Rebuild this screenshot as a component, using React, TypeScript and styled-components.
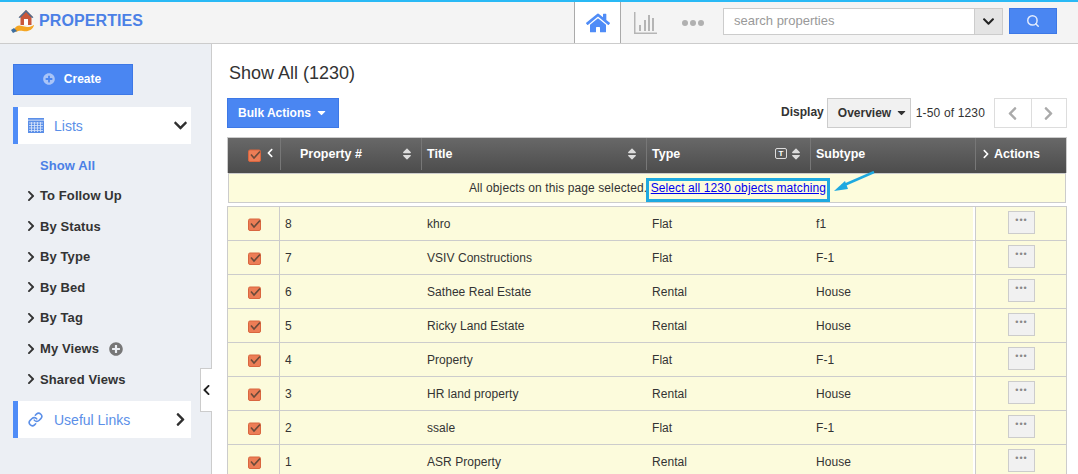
import React from "react";
import styled, { createGlobalStyle } from "styled-components";
import { FaHome, FaChevronDown, FaChevronRight, FaChevronLeft, FaPlusCircle, FaSort, FaCaretDown } from "react-icons/fa";
import { FiLink, FiSearch } from "react-icons/fi";

const rows = [
    ["8", "khro", "Flat", "f1"],
    ["7", "VSIV Constructions", "Flat", "F-1"],
    ["6", "Sathee Real Estate", "Rental", "House"],
    ["5", "Ricky Land Estate", "Rental", "House"],
    ["4", "Property", "Flat", "F-1"],
    ["3", "HR land property", "Rental", "House"],
    ["2", "ssale", "Flat", "F-1"],
    ["1", "ASR Property", "Rental", "House"],
];

const navItems = ["To Follow Up", "By Status", "By Type", "By Bed", "By Tag", "My Views", "Shared Views"];

const headColumns = "52px 141px 225px 164px 165px 1fr";
const rowColumns = "52px 142px 225px 164px 164px 1fr";

function CheckIcon() {
    return (
        <svg width="13" height="13" viewBox="0 0 13 13">
            <rect x="0.5" y="1" width="12" height="11.5" rx="1.5" fill="#ec7d56" stroke="#d9663f" />
            <path d="M3 5.5 L6 9 L12 2.5" fill="none" stroke="#6b4a3a" strokeWidth="1.6" />
        </svg>
    );
}

function Logo() {
    return (
        <svg width="23" height="24" viewBox="0 0 23 24">
            <path d="M15 1 L22 8 L20.5 8 L20.5 16 L9.5 16 L9.5 8 L8 8 Z" fill="#c9573a" />
            <path d="M15 1 L22.5 8.5 L21 9 L15 3 L9 9 L7.5 8.5 Z" fill="#4a6f94" />
            <rect x="13" y="10" width="4" height="6" fill="#fff" />
            <path d="M3 21 C5 16 8 16 11 17 L16 18 C21 18 22 16 23 16 C22 21 17 23 12 22 C9 21.5 7 22 5 23 Z" fill="#f5a623" />
            <path d="M0 21 L3 19 L6 22 L2 24 Z" fill="#3f6fa0" />
        </svg>
    );
}

function BarsIcon() {
    return (
        <svg width="23" height="22" viewBox="0 0 23 22" fill="#b5b5b5">
            <rect x="0" y="0" width="1.5" height="22" />
            <rect x="0" y="20.5" width="23" height="1.5" />
            <rect x="5" y="13" width="2" height="6" />
            <rect x="10" y="8" width="2" height="11" />
            <rect x="14" y="3" width="2" height="16" />
            <rect x="18" y="6" width="2" height="13" />
        </svg>
    );
}

function CalendarIcon() {
    return (
        <svg width="16" height="15" viewBox="0 0 16 15">
            <rect x="0" y="0" width="16" height="15" fill="#5b8fe8" />
            <rect x="0" y="1.5" width="16" height="1.5" fill="#a9c4f2" />
            <path d="M1 5h14M1 7.5h14M1 10h14M1 12.5h14M3.5 4v10M6.5 4v10M9.5 4v10M12.5 4v10" stroke="#dce7fa" strokeWidth="0.8" />
        </svg>
    );
}

export default function App() {
    return (
        <>
            <GlobalStyle />
            <Page>
                <Header>
                    <Brand>
                        <Logo />
                        <BrandName>PROPERTIES</BrandName>
                    </Brand>
                    <HomeTab>
                        <FaHome size={24} color="#4f8cf7" />
                    </HomeTab>
                    <HeaderIcon>
                        <BarsIcon />
                    </HeaderIcon>
                    <Dots>
                        <i />
                        <i />
                        <i />
                    </Dots>
                    <SearchBox>
                        <SearchInput>search properties</SearchInput>
                        <SearchCaret>
                            <FaChevronDown size={13} color="#222" />
                        </SearchCaret>
                    </SearchBox>
                    <SearchButton>
                        <FiSearch size={14} color="#e3ecfd" strokeWidth={2.5} />
                    </SearchButton>
                </Header>
                <Body>
                    <Sidebar>
                        <CreateButton>
                            <FaPlusCircle size={12} color="#a9c4f7" />
                            Create
                        </CreateButton>
                        <Panel>
                            <PanelIcon>
                                <CalendarIcon />
                            </PanelIcon>
                            <PanelLabel>Lists</PanelLabel>
                            <FaChevronDown size={15} color="#2f2f2f" />
                        </Panel>
                        <NavList>
                            <ActiveItem>Show All</ActiveItem>
                            {navItems.map((item) => (
                                <NavItem key={item}>
                                    <FaChevronRight size={12} color="#333" />
                                    {item}
                                    {item === "My Views" && (
                                        <AddView>
                                            <FaPlusCircle size={14} color="#777" />
                                        </AddView>
                                    )}
                                </NavItem>
                            ))}
                        </NavList>
                        <Panel>
                            <PanelIcon>
                                <FiLink size={15} color="#5b8fe8" strokeWidth={2.5} />
                            </PanelIcon>
                            <PanelLabel>Useful Links</PanelLabel>
                            <FaChevronRight size={15} color="#2f2f2f" />
                        </Panel>
                        <Collapse>
                            <FaChevronLeft size={12} color="#222" />
                        </Collapse>
                    </Sidebar>
                    <Main>
                        <Title>Show All (1230)</Title>
                        <Toolbar>
                            <BulkButton>
                                Bulk Actions
                                <FaCaretDown size={13} />
                            </BulkButton>
                            <Pager>
                                <DisplayLabel>Display</DisplayLabel>
                                <DisplaySelect>
                                    Overview
                                    <FaCaretDown size={13} color="#333" />
                                </DisplaySelect>
                                <PageCount>1-50 of 1230</PageCount>
                                <PagerButtons>
                                    <PagerButton>
                                        <FaChevronLeft size={15} color="#aaa" />
                                    </PagerButton>
                                    <PagerButton>
                                        <FaChevronRight size={15} color="#aaa" />
                                    </PagerButton>
                                </PagerButtons>
                            </Pager>
                        </Toolbar>
                        <Table>
                            <HeadRow>
                                <HeadCheck>
                                    <CheckIcon />
                                    <HeadChevron>
                                        <FaChevronLeft size={10} color="#fff" />
                                    </HeadChevron>
                                </HeadCheck>
                                <HeadCell $indent={19}>
                                    Property #
                                    <FaSort size={14} color="#ddd" />
                                </HeadCell>
                                <HeadCell>
                                    Title
                                    <FaSort size={14} color="#ddd" />
                                </HeadCell>
                                <HeadCell>
                                    Type
                                    <SortGroup>
                                        <FilterBadge>T</FilterBadge>
                                        <FaSort size={14} color="#ddd" />
                                    </SortGroup>
                                </HeadCell>
                                <HeadCell>Subtype</HeadCell>
                                <ActionsHead>
                                    <FaChevronRight size={10} color="#fff" />
                                    Actions
                                </ActionsHead>
                            </HeadRow>
                            <Notice>
                                All objects on this page selected.
                                <Highlight>
                                    <NoticeLink href="#">Select all 1230 objects matching</NoticeLink>
                                </Highlight>
                                <Arrow width="42" height="22" viewBox="0 0 42 22">
                                    <path d="M40 1 L8 15" stroke="#1ea9e0" strokeWidth="2.5" fill="none" />
                                    <path d="M0 20 L11 10 L14 18 Z" fill="#1ea9e0" />
                                </Arrow>
                            </Notice>
                            {rows.map((row) => (
                                <Row key={row[0]}>
                                    <CheckCell>
                                        <CheckIcon />
                                    </CheckCell>
                                    {row.map((value, i) => (
                                        <Cell key={i}>{value}</Cell>
                                    ))}
                                    <ActionCell>
                                        <MoreButton>•••</MoreButton>
                                    </ActionCell>
                                </Row>
                            ))}
                        </Table>
                    </Main>
                </Body>
            </Page>
        </>
    );
}

const GlobalStyle = createGlobalStyle`
    html, body {
        margin: 0;
        height: 100%;
        overflow: hidden;
        background: #fff;
    }
    body {
        font-family: "Liberation Sans", Arial, sans-serif;
        font-size: 12px;
        color: #333;
    }
`;

const Page = styled.div`
    width: 1078px;
    height: 474px;
    overflow: hidden;
    display: flex;
    flex-direction: column;
`;

const Header = styled.header`
    height: 44px;
    box-sizing: border-box;
    flex: none;
    display: flex;
    align-items: stretch;
    background: #f4f4f4;
    border-top: 2px solid #29b9f5;
    border-bottom: 1px solid #ccc;
`;

const Brand = styled.div`
    width: 574px;
    padding: 7px 0 0 11px;
    box-sizing: border-box;
    display: flex;
    align-items: flex-start;
    gap: 5px;
`;

const BrandName = styled.span`
    font-size: 16px;
    font-weight: bold;
    color: #4b80e6;
    line-height: 22px;
    margin-top: 1px;
    letter-spacing: 0.1px;
`;

const HomeTab = styled.div`
    width: 47px;
    box-sizing: border-box;
    background: #fff;
    border-left: 1px solid #aaa;
    border-right: 1px solid #aaa;
    display: flex;
    align-items: center;
    justify-content: center;
`;

const HeaderIcon = styled.div`
    width: 61px;
    padding-left: 13px;
    box-sizing: border-box;
    display: flex;
    align-items: center;
`;

const Dots = styled.div`
    width: 41px;
    display: flex;
    align-items: center;
    gap: 2px;

    i {
        width: 6px;
        height: 6px;
        border-radius: 50%;
        background: #b0b0b0;
    }
`;

const SearchBox = styled.div`
    width: 280px;
    height: 27px;
    margin-top: 6px;
    box-sizing: border-box;
    display: flex;
    border: 1px solid #ccc;
    background: #fff;
`;

const SearchInput = styled.div`
    flex: 1;
    padding-left: 10px;
    line-height: 24px;
    font-size: 13px;
    color: #999;
`;

const SearchCaret = styled.div`
    width: 27px;
    background: #e4e4e4;
    border-left: 1px solid #ccc;
    display: flex;
    align-items: center;
    justify-content: center;
`;

const SearchButton = styled.div`
    width: 48px;
    height: 26px;
    margin: 6px 0 0 6px;
    background: #4a86f2;
    border: 1px solid #3d78e6;
    box-sizing: border-box;
    display: flex;
    align-items: center;
    justify-content: center;
`;

const Body = styled.div`
    flex: 1;
    display: flex;
    min-height: 0;
`;

const Sidebar = styled.aside`
    position: relative;
    width: 212px;
    box-sizing: border-box;
    flex: none;
    padding: 20px 20px 0 13px;
    background: #eceff4;
    border-right: 1px solid #ccc;
`;

const CreateButton = styled.div`
    width: 120px;
    height: 31px;
    box-sizing: border-box;
    display: flex;
    align-items: center;
    justify-content: center;
    gap: 9px;
    padding: 0 2px 2px 0;
    background: #4a86f2;
    border: 1px solid #3d78e6;
    color: #fff;
    font-size: 12px;
    font-weight: bold;
`;

const Panel = styled.div`
    width: 178px;
    height: 37px;
    box-sizing: border-box;
    margin-top: 12px;
    display: flex;
    align-items: center;
    padding-right: 3px;
    background: #fff;
    border-left: 5px solid #4f8cf7;
`;

const PanelIcon = styled.span`
    width: 36px;
    padding-left: 10px;
    box-sizing: border-box;
    display: flex;
`;

const PanelLabel = styled.span`
    flex: 1;
    font-size: 14px;
    color: #5b8fe8;
`;

const NavList = styled.div`
    padding: 13px 0 2px 12px;
    display: flex;
    flex-direction: column;
    gap: 14.6px;
`;

const NavItem = styled.div`
    display: flex;
    align-items: center;
    gap: 3px;
    height: 16px;
    font-size: 13px;
    font-weight: bold;
    color: #333;
    letter-spacing: 0.1px;
`;

const ActiveItem = styled(NavItem)`
    padding-left: 15px;
    color: #4b80e6;
`;

const AddView = styled.span`
    display: flex;
    margin-left: 7px;
`;

const Collapse = styled.div`
    position: absolute;
    right: -1px;
    top: 324px;
    width: 12px;
    height: 44px;
    box-sizing: border-box;
    background: #fff;
    border: 1px solid #ccc;
    border-right: none;
    display: flex;
    align-items: center;
    justify-content: center;
`;

const Main = styled.main`
    flex: 1;
    min-width: 0;
    padding: 18px 11px 0 15px;
`;

const Title = styled.h1`
    margin: 0 0 0 2px;
    font-size: 18px;
    font-weight: normal;
    line-height: 22px;
    color: #333;
`;

const Toolbar = styled.div`
    display: flex;
    justify-content: space-between;
    align-items: flex-start;
    margin-top: 14px;
`;

const BulkButton = styled.div`
    width: 112px;
    height: 30px;
    box-sizing: border-box;
    display: flex;
    align-items: center;
    justify-content: center;
    gap: 4px;
    padding-bottom: 1px;
    background: #4a86f2;
    border: 1px solid #3d78e6;
    color: #fff;
    font-weight: bold;
`;

const Pager = styled.div`
    display: flex;
    align-items: center;
`;

const DisplayLabel = styled.span`
    font-weight: bold;
    margin: -3px 3px 0 0;
`;

const DisplaySelect = styled.div`
    width: 84px;
    height: 30px;
    margin-top: -1px;
    box-sizing: border-box;
    display: flex;
    align-items: center;
    justify-content: space-between;
    padding: 0 2px 0 10px;
    background: #f1f1f1;
    border: 1px solid #ccc;
    font-weight: bold;
`;

const PageCount = styled.span`
    margin: 0 9px 0 5px;
    letter-spacing: 0.15px;
`;

const PagerButtons = styled.div`
    display: flex;
    border: 1px solid #ddd;
`;

const PagerButton = styled.div`
    width: 35.5px;
    height: 28px;
    box-sizing: border-box;
    display: flex;
    align-items: center;
    justify-content: center;
    background: #fff;

    & + & {
        border-left: 1px solid #ddd;
    }
`;

const Table = styled.div`
    margin-top: 9px;
    width: 840px;
`;

const HeadRow = styled.div`
    display: grid;
    grid-template-columns: ${headColumns};
    height: 36px;
    box-sizing: border-box;
    border: 1px solid #ccc;
    border-bottom: none;
    background: linear-gradient(#686868, #4c4c4c);
    color: #fff;
    font-weight: bold;
    font-size: 12.5px;
`;

const HeadCell = styled.div<{ $indent?: number }>`
    display: flex;
    align-items: center;
    justify-content: space-between;
    padding: 0 7px 1px ${(p) => p.$indent ?? 5}px;
    border-left: 1px solid #777;
    margin-bottom: 3px;
`;

const HeadCheck = styled.div`
    display: flex;
    align-items: flex-start;
    gap: 4px;
    padding: 11px 0 0 20px;
`;

const HeadChevron = styled.span`
    display: flex;
    margin-top: -1px;
`;

const SortGroup = styled.span`
    display: flex;
    align-items: center;
    gap: 2px;
`;

const FilterBadge = styled.span`
    width: 12px;
    height: 11px;
    box-sizing: border-box;
    border: 1px solid #ddd;
    border-radius: 2px;
    font-size: 8px;
    line-height: 9px;
    text-align: center;
`;

const ActionsHead = styled(HeadCell)`
    justify-content: flex-start;
    gap: 3px;
    padding-left: 5px;
`;

const Notice = styled.div`
    position: relative;
    height: 30px;
    width: 838px;
    margin-left: 1px;
    box-sizing: border-box;
    margin-bottom: 3px;
    display: flex;
    align-items: center;
    padding-left: 240px;
    background: #fdfcdc;
    border: 1px solid #ccc;
    font-size: 12px;
    color: #333;
    letter-spacing: 0.1px;
`;

const Highlight = styled.span`
    align-self: flex-end;
    border: 3px solid #1ea9e0;
    padding: 0 1px 4px 2px;
    line-height: 14px;
    margin-left: -1.5px;
`;

const NoticeLink = styled.a`
    color: #0000ee;
`;

const Arrow = styled.svg`
    position: absolute;
    left: 605px;
    top: -3px;
`;

const Row = styled.div`
    display: grid;
    grid-template-columns: ${rowColumns};
    height: 34px;
    box-sizing: border-box;
    background: #fcfbdc;
    border-top: 1px solid #ccc;
    border-left: 1px solid #ccc;
    border-right: 1px solid #ccc;
`;

const Cell = styled.div`
    display: flex;
    align-items: center;
    padding-left: 5px;
    color: #333;
    letter-spacing: 0.05px;
`;

const CheckCell = styled.div`
    display: flex;
    align-items: center;
    justify-content: center;
    padding: 2px 0 0 1px;
    border-right: 1px solid #ccc;
`;

const ActionCell = styled.div`
    display: flex;
    align-items: center;
    justify-content: center;
    border-left: 1px solid #ccc;
    box-shadow: -2px 0 0 #fff;
    padding-left: 1px;
`;

const MoreButton = styled.div`
    width: 27px;
    height: 23px;
    margin-top: -2px;
    box-sizing: border-box;
    background: #f1f1f1;
    border: 1px solid #ccc;
    color: #888;
    font-size: 9px;
    letter-spacing: 1px;
    line-height: 17px;
    text-align: center;
`;
